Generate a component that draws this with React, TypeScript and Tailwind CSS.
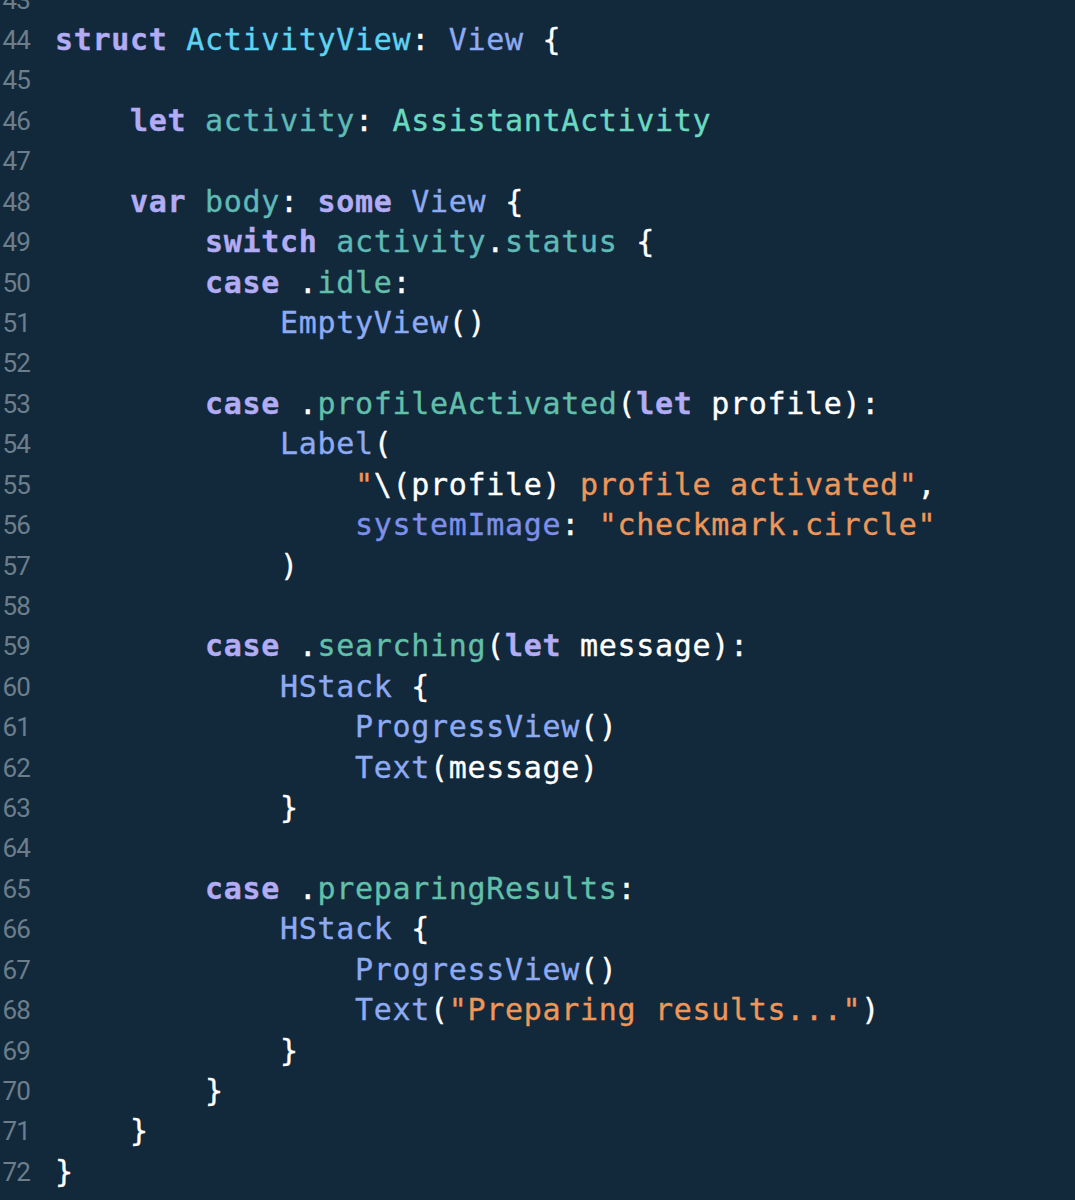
const KW = 'text-[#b2acf4] font-bold';
const PROP = 'text-[#5fb9b6]';
const CASE = 'text-[#62bfaa]';
const DECL = 'text-[#5fd3f2]';
const TYPE = 'text-[#8eaaf3]';
const PTYPE = 'text-[#6bd8c0]';
const ARG = 'text-[#7d8fea]';
const STR = 'text-[#ef9659]';
const TXT = 'text-white';

type Tok = [string, string];

const lines: { n: number; indent: number; toks: Tok[] }[] = [
  { n: 43, indent: 0, toks: [] },
  { n: 44, indent: 0, toks: [['struct', KW], [' ', TXT], ['ActivityView', DECL], [': ', TXT], ['View', TYPE], [' {', TXT]] },
  { n: 45, indent: 0, toks: [] },
  { n: 46, indent: 4, toks: [['let', KW], [' ', TXT], ['activity', PROP], [': ', TXT], ['AssistantActivity', PTYPE]] },
  { n: 47, indent: 0, toks: [] },
  { n: 48, indent: 4, toks: [['var', KW], [' ', TXT], ['body', PROP], [': ', TXT], ['some', KW], [' ', TXT], ['View', TYPE], [' {', TXT]] },
  { n: 49, indent: 8, toks: [['switch', KW], [' ', TXT], ['activity', PROP], ['.', TXT], ['status', PROP], [' {', TXT]] },
  { n: 50, indent: 8, toks: [['case', KW], [' .', TXT], ['idle', CASE], [':', TXT]] },
  { n: 51, indent: 12, toks: [['EmptyView', TYPE], ['()', TXT]] },
  { n: 52, indent: 0, toks: [] },
  { n: 53, indent: 8, toks: [['case', KW], [' .', TXT], ['profileActivated', CASE], ['(', TXT], ['let', KW], [' profile):', TXT]] },
  { n: 54, indent: 12, toks: [['Label', TYPE], ['(', TXT]] },
  { n: 55, indent: 16, toks: [['"', STR], ['\\(profile)', TXT], [' profile activated"', STR], [',', TXT]] },
  { n: 56, indent: 16, toks: [['systemImage', ARG], [': ', TXT], ['"checkmark.circle"', STR]] },
  { n: 57, indent: 12, toks: [[')', TXT]] },
  { n: 58, indent: 0, toks: [] },
  { n: 59, indent: 8, toks: [['case', KW], [' .', TXT], ['searching', CASE], ['(', TXT], ['let', KW], [' message):', TXT]] },
  { n: 60, indent: 12, toks: [['HStack', TYPE], [' {', TXT]] },
  { n: 61, indent: 16, toks: [['ProgressView', TYPE], ['()', TXT]] },
  { n: 62, indent: 16, toks: [['Text', TYPE], ['(message)', TXT]] },
  { n: 63, indent: 12, toks: [['}', TXT]] },
  { n: 64, indent: 0, toks: [] },
  { n: 65, indent: 8, toks: [['case', KW], [' .', TXT], ['preparingResults', CASE], [':', TXT]] },
  { n: 66, indent: 12, toks: [['HStack', TYPE], [' {', TXT]] },
  { n: 67, indent: 16, toks: [['ProgressView', TYPE], ['()', TXT]] },
  { n: 68, indent: 16, toks: [['Text', TYPE], ['(', TXT], ['"Preparing results..."', STR], [')', TXT]] },
  { n: 69, indent: 12, toks: [['}', TXT]] },
  { n: 70, indent: 8, toks: [['}', TXT]] },
  { n: 71, indent: 4, toks: [['}', TXT]] },
  { n: 72, indent: 0, toks: [['}', TXT]] },
];

const App = () => {
  return (
    <div className="w-[1075px] h-[1200px] bg-[#12293b] overflow-hidden">
      <div className="mt-[-20.6px] flex flex-col">
        {lines.map(line => (
          <div key={line.n} className="flex h-[40.43px] items-center">
            {/* Gutter */}
            <div className="w-[30px] shrink-0 flex justify-end text-[26px] text-[#6c7e8b] font-['Roboto',sans-serif] tracking-[-0.8px] leading-none">
              {line.n}
            </div>
            {/* Code */}
            <div className="ml-[25px] whitespace-pre font-['DejaVu_Sans_Mono',monospace] text-[30px] tracking-[0.69px] leading-none [-webkit-text-stroke:0.35px_currentColor]">
              {' '.repeat(line.indent)}
              {line.toks.map((t, i) => (
                <span key={i} className={t[1]}>
                  {t[0]}
                </span>
              ))}
            </div>
          </div>
        ))}
      </div>
    </div>
  );
};

export default App;
